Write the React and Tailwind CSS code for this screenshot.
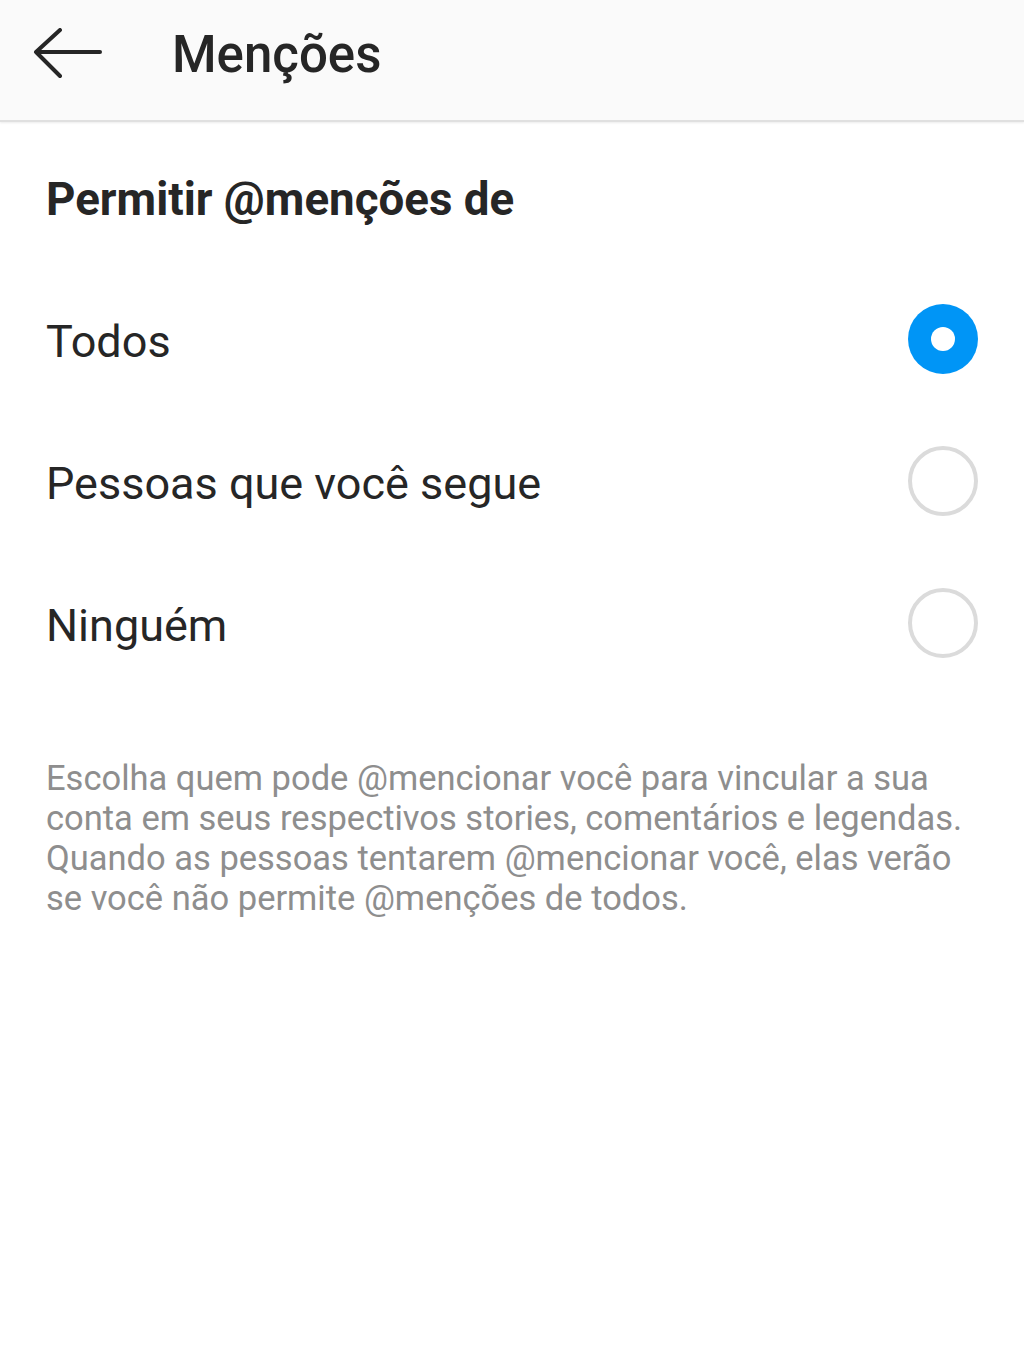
import React from "react";

function Radio({ checked }) {
  if (checked) {
    return (
      <div className="w-[70px] h-[70px] rounded-full bg-[#0095f6] flex items-center justify-center">
        <div className="w-[24px] h-[24px] rounded-full bg-white" />
      </div>
    );
  }
  return <div className="w-[70px] h-[70px] rounded-full border-[4px] border-[#dbdbdb]" />;
}

export default function App() {
  const options = [
    { label: "Todos", checked: true },
    { label: "Pessoas que você segue", checked: false },
    { label: "Ninguém", checked: false },
  ];
  return (
    <div className="w-[1024px] h-[1365px] bg-white text-[#262626]" style={{ fontFamily: "Roboto, 'Noto Sans', sans-serif" }}>
      <header className="h-[122px] pb-[12px] bg-[#fafafa] border-b-2 border-[#e0e0e0] flex items-center shadow-[0_1px_2px_rgba(0,0,0,0.08)]">
        <div className="w-[172px] pl-[33px] flex items-center">
          <svg width="70" height="52" viewBox="0 0 70 52" fill="none" stroke="#262626" strokeWidth="4" strokeLinecap="round" strokeLinejoin="round">
            <path d="M67 24H4" />
            <path d="M27 2L3 24l24 24" />
          </svg>
        </div>
        <h1 className="text-[51px] font-medium leading-none text-[#262626]">Menções</h1>
      </header>
      <div className="px-[46px]">
        <h2 className="pt-[53px] text-[45.7px] font-bold leading-[50px] text-[#262626]">Permitir @menções de</h2>
        <div className="mt-[45px] flex flex-col">
          {options.map((o) => (
            <div key={o.label} className="h-[142px] flex items-center justify-between">
              <span className="text-[45px] leading-none text-[#262626]">{o.label}</span>
              <div className="-mt-[4px]">
                <Radio checked={o.checked} />
              </div>
            </div>
          ))}
        </div>
        <p className="mt-[62px] text-[34.5px] leading-[40px] text-[#8e8e8e]">
          Escolha quem pode @mencionar você para vincular a sua conta em seus respectivos stories, comentários e legendas. Quando as pessoas tentarem @mencionar você, elas verão se você não permite @menções de todos.
        </p>
      </div>
    </div>
  );
}
